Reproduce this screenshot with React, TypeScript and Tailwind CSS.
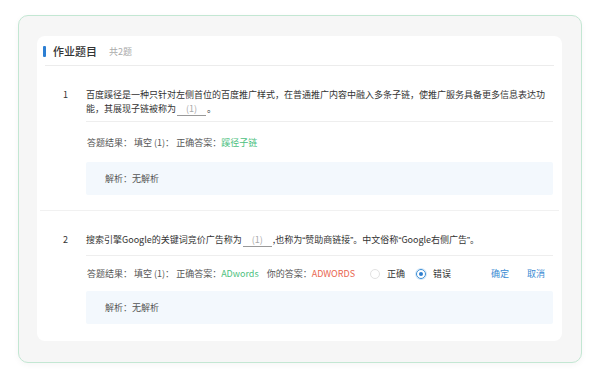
import React from "react";

const font = { fontFamily: '"Noto Sans CJK SC", "Noto Sans", sans-serif' };

function Blank() {
  return <span className="mx-[1px] border-b border-[#999] px-[9px] text-[#aaa]">(1)</span>;
}

// latin curly quotes, narrow like the reference
function Q({ children }: { children: string }) {
  return <span className="font-['Liberation_Sans',sans-serif]">{children}</span>;
}

function Analysis() {
  return (
    <div className="flex h-[33px] items-center rounded-[2px] bg-[#f3f8fd] pl-[19px] text-[9px] text-[#555]">
      解析：无解析
    </div>
  );
}

function Radio({ checked, label }: { checked?: boolean; label: string }) {
  return (
    <span className="flex items-center">
      <span
        className={
          checked
            ? "flex h-[10px] w-[10px] items-center justify-center rounded-full border border-[#3d8fd6] shadow-[0_0_0_1px_#d8e9f8]"
            : "h-[10px] w-[10px] rounded-full border border-[#e2e2e2]"
        }
      >
        {checked && <span className="h-[4px] w-[4px] rounded-full bg-[#2f7fcf]" />}
      </span>
      <span className="ml-[7px] text-[#333]">{label}</span>
    </span>
  );
}

export default function App() {
  return (
    <div className="h-[383px] w-[600px] bg-white px-[18px] pt-[15px]" style={font}>
      <div className="h-[348px] rounded-[10px] border border-[#c3e7d3] bg-[#f6f6f6] pl-[18px] pr-[19px] pt-[20px] shadow-[0_2px_6px_rgba(0,0,0,0.04)]">
        <div className="h-[305px] rounded-[8px] bg-white">
          {/* header */}
          <div className="flex h-[29px] items-center pl-[6px] pt-[2px]">
            <span className="h-[11px] w-[3px] rounded-[1px] bg-[#2d7fd3]" />
            <span className="ml-[7px] text-[11px] font-medium text-[#333]">作业题目</span>
            <span className="ml-[12px] text-[9px] text-[#aaa]">共2题</span>
          </div>
          <div className="mx-[8px] border-b border-[#ececec]" />

          {/* question 1 */}
          <div className="flex pl-[26px] pr-[9px] pt-[22px]">
            <span className="w-[23px] text-[9px] leading-[14px] text-[#333]">1</span>
            <div className="flex-1">
              <p className="whitespace-nowrap text-[9px] leading-[14px] text-[#333]">
                百度蹊径是一种只针对左侧首位的百度推广样式，在普通推广内容中融入多条子链，使推广服务具备更多信息表达功
                <br />
                能，其展现子链被称为
                <Blank />。
              </p>
              <div className="mt-[5px] border-b border-[#eeeeee]" />
              <div className="flex h-[40px] items-center pl-[1px] pt-[1px] text-[9px] text-[#555]">
                <span>答题结果：</span>
                <span className="ml-[2px]">填空 (1)：</span>
                <span className="ml-[2px]">正确答案：</span>
                <span className="text-[#4cbf7e]">蹊径子链</span>
              </div>
              <Analysis />
            </div>
          </div>

          <div className="mx-[3px] mt-[15px] border-b border-[#f1f1f1]" />

          {/* question 2 */}
          <div className="flex pl-[26px] pr-[9px] pt-[22px]">
            <span className="w-[23px] text-[9px] leading-[14px] text-[#333]">2</span>
            <div className="flex-1">
              <p className="text-[9px] leading-[14px] text-[#333]">
                搜索引擎Google的关键词竞价广告称为
                <Blank />
                ,也称为<Q>“</Q>赞助商链接<Q>”</Q>。中文俗称<Q>“</Q>Google右侧广告<Q>”</Q>。
              </p>
              <div className="mt-[8px] border-b border-[#eeeeee]" />
              <div className="flex h-[35px] items-center pl-[1px] text-[9px] text-[#555]">
                <span>答题结果：</span>
                <span className="ml-[2px]">填空 (1)：</span>
                <span className="ml-[2px]">正确答案：</span>
                <span className="text-[#4cbf7e]">ADwords</span>
                <span className="ml-[8px]">你的答案：</span>
                <span className="text-[#e9654f]">ADWORDS</span>
                <span className="ml-[15px]">
                  <Radio label="正确" />
                </span>
                <span className="ml-[11px]">
                  <Radio checked label="错误" />
                </span>
                <span className="ml-auto text-[#3a8bd3]">确定</span>
                <span className="ml-[18px] mr-[8px] text-[#3a8bd3]">取消</span>
              </div>
              <Analysis />
            </div>
          </div>
        </div>
      </div>
    </div>
  );
}
